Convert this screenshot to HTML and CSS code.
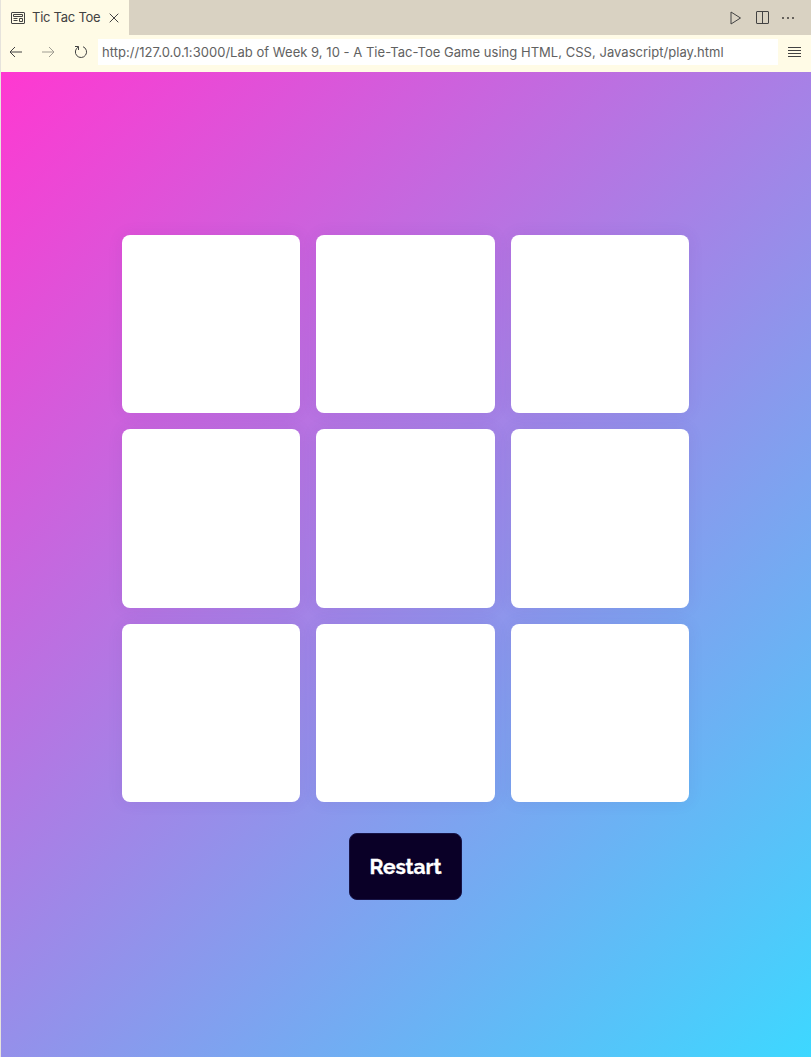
FILE: index.html
```html
<!DOCTYPE html>
<html lang="en">
<head>
<meta charset="utf-8">
<title>Tic Tac Toe</title>
<link rel="stylesheet" href="styles.css">
</head>
<body>
<div class="editor">
  <header class="tabs">
    <div class="tab">
      <svg class="icon tab-icon" width="16" height="16" viewBox="0 0 16 16"><rect x="1.5" y="2.5" width="13" height="11" rx=".5"/><path d="M3.5 4.5h9v2h-9zM3.5 8.5h4M3.5 10.5h4M9.5 8.5h3v3h-3z"/></svg>
      <span class="tab-title">Tic Tac Toe</span>
      <svg class="icon" width="10" height="10" viewBox="0 0 10 10"><path d="M.7 .7l8.6 8.6M9.3 .7L.7 9.3"/></svg>
    </div>
    <div class="actions">
      <svg class="icon" width="12" height="14" viewBox="0 0 12 14"><path d="M1 1v12l9.5-6z"/></svg>
      <svg class="icon split" width="13" height="13" viewBox="0 0 13 13"><rect x=".5" y=".5" width="12" height="12" rx=".5"/><path d="M6.5 .5v12"/></svg>
      <svg class="dots" width="12" height="2" viewBox="0 0 12 2"><path d="M0 0h2v2H0zM5 0h2v2H5zM10 0h2v2h-2z"/></svg>
    </div>
  </header>
  <nav class="toolbar">
    <svg class="icon" width="13" height="12" viewBox="0 0 13 12"><path d="M6 1L1 6l5 5M1 6h12"/></svg>
    <svg class="icon forward" width="13" height="12" viewBox="0 0 13 12"><path d="M7 1l5 5-5 5M12 6H0"/></svg>
    <svg class="icon reload" width="14" height="14" viewBox="0 0 14 14"><path d="M1 1.5h3.5V5M4.3 2A5.6 5.6 0 1 0 9 1.7"/></svg>
    <div class="address"><span class="url">http://127.0.0.1:3000/Lab of Week 9, 10 - A Tie-Tac-Toe Game using HTML, CSS, Javascript/play.html</span></div>
    <svg class="icon menu" width="13" height="11" viewBox="0 0 13 11"><path d="M0 .5h13M0 3.5h13M0 6.5h13M0 9.5h13"/></svg>
  </nav>
  <main class="game">
    <div class="board">
      <button class="cell"></button><button class="cell"></button><button class="cell"></button>
      <button class="cell"></button><button class="cell"></button><button class="cell"></button>
      <button class="cell"></button><button class="cell"></button><button class="cell"></button>
    </div>
    <button class="restart"><span class="restart-label">Restart</span></button>
  </main>
</div>
</body>
</html>
```
FILE: styles.css
```css
* { box-sizing: border-box; }
body { margin: 0; font-family: Inter, "Liberation Sans", sans-serif; }
.editor { height: 100vh; display: flex; flex-direction: column; border-left: 1px solid #e6e3dc; background: #fffbe6; overflow: hidden; }
.icon { display: block; flex: none; fill: none; stroke: #424242; stroke-width: 1; }
.tabs { height: 35px; flex: none; display: flex; justify-content: space-between; background: #d9d2c2; }
.tab { width: 128px; display: flex; align-items: center; padding-left: 9px; background: #fffbe6; color: #424242; }
.tab-title { width: 77px; margin-left: 6px; font-size: 13px; line-height: 35px; letter-spacing: -.25px; white-space: nowrap; }
.actions { display: flex; align-items: center; padding-right: 17px; }
.split { margin: 0 13px 0 14px; }
.dots { fill: #66625c; }
.toolbar { height: 37px; flex: none; display: flex; align-items: center; padding: 0 10px 3px 8px; }
.forward { margin-left: 20px; opacity: .5; }
.reload { margin: 0 10px 0 19px; }
.address { height: 26px; width: 680px; display: flex; align-items: center; padding-left: 4px; background: #fff; color: #616161; }
.url { font-size: 13px; letter-spacing: .03px; white-space: nowrap; }
.menu { margin-left: 10px; }
.game { flex: 1; display: flex; flex-direction: column; align-items: center; padding: 163px 1px 0 0; background: linear-gradient(135deg, #ff38d1, #3dd8ff); }
.board { width: 567px; height: 567px; display: grid; grid-template-columns: repeat(3, 1fr); grid-template-rows: repeat(3, 1fr); gap: 16px; }
.cell { border: 0; padding: 0; border-radius: 8px; background: #fff; box-shadow: 0 0 16px rgba(80, 40, 140, .09); }
.restart { width: 113px; height: 67px; margin-top: 31px; padding: 0; border: 1px solid #171447; border-radius: 8px; background: #0a0027; color: #fff; font: 700 21px Raleway, Lato, sans-serif; -webkit-text-stroke: .3px #fff; }
.restart-label { letter-spacing: -.1px; }
```
